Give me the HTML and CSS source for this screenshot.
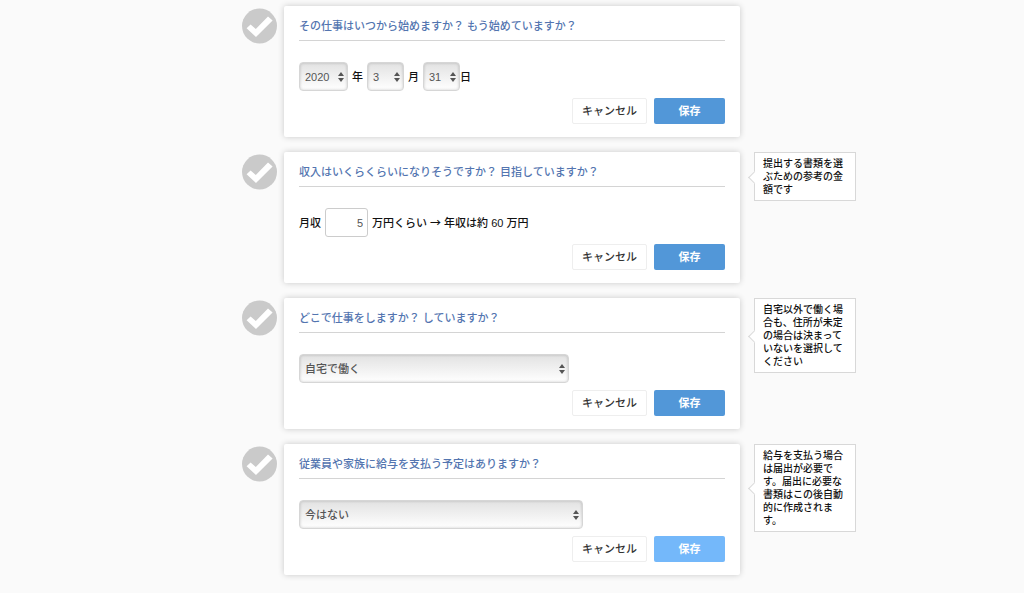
FILE: index.html
```html
<!DOCTYPE html>
<html lang="ja">
<head>
  <meta charset="utf-8">
  <meta name="viewport" content="width=device-width, initial-scale=1">
  <title>開業の質問</title>
  <link rel="stylesheet" href="styles.css">
</head>
<body>
  <svg class="symbols" aria-hidden="true">
    <symbol id="check" viewBox="0 0 36 36">
      <circle cx="17.5" cy="18" r="17.5" fill="#cacaca"/>
      <path d="M4.6 20.2l4-3.8 5.2 4.6L26 8.4l4.6 4.1L14 29z" fill="#fff"/>
    </symbol>
  </svg>

  <main class="questions">
    <form class="question">
      <svg class="check"><use href="#check"/></svg>
      <section class="card">
        <h2>その仕事はいつから始めますか？ もう始めていますか？</h2>
        <div class="field">
          <span class="select year">
            <select id="year"><option>2020</option></select>
          </span>
          <label for="year">年</label>
          <span class="select">
            <select id="month"><option>3</option></select>
          </span>
          <label for="month">月</label>
          <span class="select day">
            <select id="day"><option>31</option></select>
          </span>
          <label for="day">日</label>
        </div>
        <div class="actions">
          <button type="button" class="cancel">キャンセル</button>
          <button type="button" class="save">保存</button>
        </div>
      </section>
    </form>

    <form class="question">
      <svg class="check"><use href="#check"/></svg>
      <section class="card">
        <h2>収入はいくらくらいになりそうですか？ 目指していますか？</h2>
        <div class="field">
          <label for="income">月収</label>
          <input type="text" id="income" value="5">
          <span>万円くらい <span class="arrow">→</span> 年収は約 60 万円</span>
        </div>
        <div class="actions">
          <button type="button" class="cancel">キャンセル</button>
          <button type="button" class="save">保存</button>
        </div>
      </section>
      <aside class="note">提出する書類を選ぶための参考の金額です</aside>
    </form>

    <form class="question">
      <svg class="check"><use href="#check"/></svg>
      <section class="card">
        <h2><label for="place">どこで仕事をしますか？ していますか？</label></h2>
        <div class="field">
          <span class="select place">
            <select id="place"><option>自宅で働く</option></select>
          </span>
        </div>
        <div class="actions">
          <button type="button" class="cancel">キャンセル</button>
          <button type="button" class="save">保存</button>
        </div>
      </section>
      <aside class="note">自宅以外で働く場合も、住所が未定の場合は決まっていないを選択してください</aside>
    </form>

    <form class="question">
      <svg class="check"><use href="#check"/></svg>
      <section class="card">
        <h2><label for="salary">従業員や家族に給与を支払う予定はありますか？</label></h2>
        <div class="field">
          <span class="select salary">
            <select id="salary"><option>今はない</option></select>
          </span>
        </div>
        <div class="actions">
          <button type="button" class="cancel">キャンセル</button>
          <button type="button" class="save active">保存</button>
        </div>
      </section>
      <aside class="note">給与を支払う場合は届出が必要です。届出に必要な書類はこの後自動的に作成されます。</aside>
    </form>
  </main>
</body>
</html>
```

FILE: styles.css
```css
* {
  box-sizing: border-box;
}
body {
  margin: 0;
  background-color: #fafafa;
  color: #111;
  font-family: "Liberation Sans", "Noto Sans CJK JP", sans-serif;
  font-size: 11px;
  font-weight: 500;
  line-height: 16px;
}
.symbols {
  display: none;
}
.questions {
  display: flex;
  flex-direction: column;
  gap: 15px;
  padding: 6px 0 18px 74px;
}
.question {
  display: grid;
  grid-template-columns: 36px minmax(0, 456px) 110px;
  justify-content: center;
  align-items: start;
  column-gap: 6px;
}
.check {
  width: 36px;
  height: 36px;
  margin-top: 2px;
}

/* Card */
.card {
  padding: 12px 15px 13px;
  background-color: #fff;
  border-radius: 2px;
  box-shadow: 0 0 6px rgba(0, 0, 0, 0.2);
}
h2 {
  margin: 0;
  padding-bottom: 6px;
  border-bottom: 1px solid #d4d4d4;
  color: #5375b0;
  font-size: 11px;
  font-weight: 500;
}
.field {
  display: flex;
  align-items: center;
  gap: 4px;
  height: 29px;
  margin-top: 21px;
}

/* Controls */
select,
input,
button {
  font: inherit;
  margin: 0;
}
.select {
  position: relative;
  width: 37px;
  height: 29px;
}
.select.year {
  width: 49px;
}
.select.day {
  margin-right: -4px;
}
.select.day select {
  width: 37px;
}
.select.place {
  width: 270px;
}
.select.salary {
  width: 284px;
}
select {
  appearance: none;
  width: 100%;
  height: 100%;
  padding: 0 5px;
  border: 1px solid #d6d6d6;
  border-radius: 4px;
  background: linear-gradient(#e2e2e2, #fff);
  box-shadow: inset 0 0 3px rgba(0, 0, 0, 0.2);
  color: #555;
}
.select::before,
.select::after {
  content: "";
  position: absolute;
  right: 4px;
  border: 3px solid transparent;
  pointer-events: none;
}
.select::before {
  top: 10px;
  border-top-width: 0;
  border-bottom: 4px solid #555;
}
.select::after {
  top: 16px;
  border-bottom-width: 0;
  border-top: 4px solid #555;
}
input {
  width: 43px;
  height: 29px;
  padding: 0 4px;
  border: 1px solid #ccc;
  border-radius: 3px;
  background-color: #fff;
  color: #555;
  text-align: right;
}
.arrow {
  font-family: "Noto Sans CJK JP", sans-serif;
}
.actions {
  display: flex;
  justify-content: flex-end;
  gap: 7px;
  margin-top: 7px;
}
button {
  height: 26px;
  padding: 0;
  border-radius: 2px;
  cursor: pointer;
}
.cancel {
  width: 75px;
  border: 1px solid #eee;
  background-color: #fff;
  color: #333;
}
.save {
  width: 71px;
  border: none;
  background-color: #5297d8;
  color: #fff;
  font-weight: bold;
}
.save.active {
  background-color: #74b8fa;
}

/* Help balloon */
.note {
  position: relative;
  margin-left: 8px;
  padding: 4px 8px;
  border: 1px solid #d8d8d8;
  background-color: #fff;
  font-size: 10px;
  line-height: 13px;
}
.note::before {
  content: "";
  position: absolute;
  top: 50%;
  left: -5px;
  width: 8px;
  height: 8px;
  margin-top: -4px;
  border-left: 1px solid #d8d8d8;
  border-bottom: 1px solid #d8d8d8;
  background-color: #fff;
  transform: rotate(45deg);
}
```
